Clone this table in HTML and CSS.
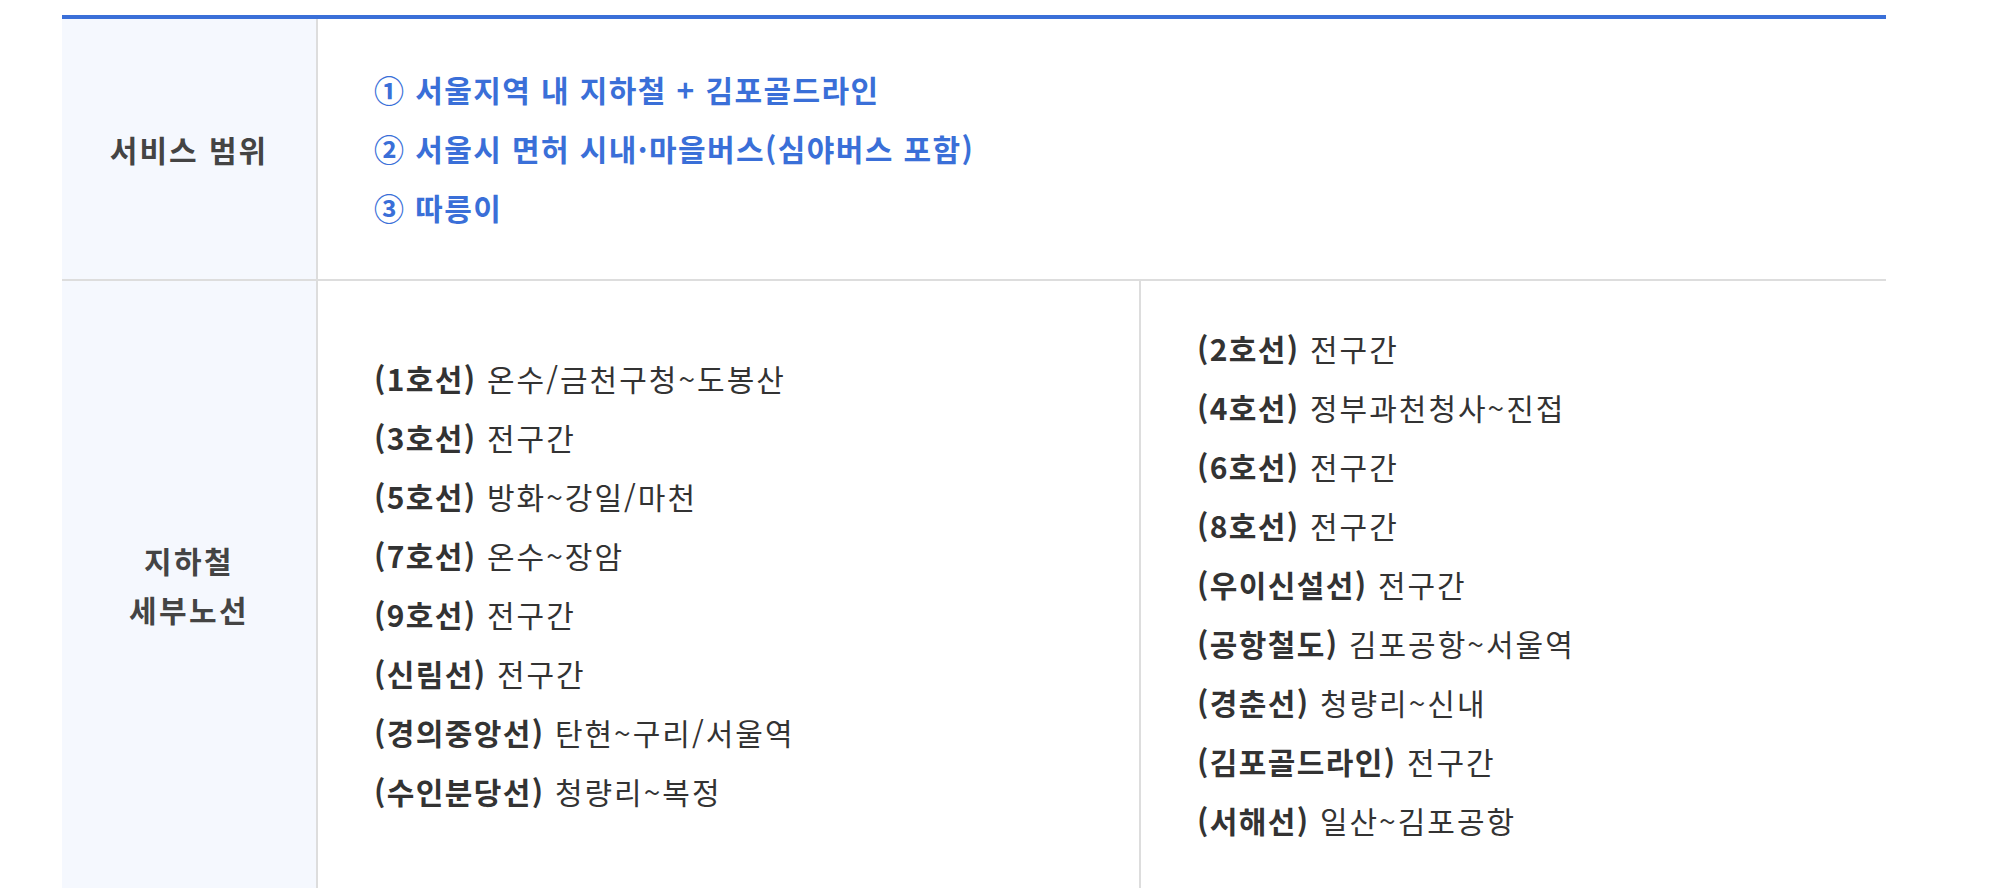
FILE: index.html
```html
<!DOCTYPE html>
<html lang="ko">
<head>
    <meta charset="UTF-8">
    <title>서비스 범위</title>
    <link rel="stylesheet" href="styles.css">
</head>
<body>
    <div class="scope">
        <div class="label row-top">서비스 범위</div>
        <div class="cell row-top">
            <ul class="range">
                <li>① 서울지역 내 지하철 + 김포골드라인</li>
                <li>② 서울시 면허 시내·마을버스(심야버스 포함)</li>
                <li>③ 따릉이</li>
            </ul>
        </div>
        <div class="label label-tall">지하철<br>세부노선</div>
        <div class="cell lines">
            <ul class="line-list">
                <li><b>(1호선)</b> 온수/금천구청~도봉산</li>
                <li><b>(3호선)</b> 전구간</li>
                <li><b>(5호선)</b> 방화~강일/마천</li>
                <li><b>(7호선)</b> 온수~장암</li>
                <li><b>(9호선)</b> 전구간</li>
                <li><b>(신림선)</b> 전구간</li>
                <li><b>(경의중앙선)</b> 탄현~구리/서울역</li>
                <li><b>(수인분당선)</b> 청량리~복정</li>
            </ul>
            <ul class="line-list">
                <li><b>(2호선)</b> 전구간</li>
                <li><b>(4호선)</b> 정부과천청사~진접</li>
                <li><b>(6호선)</b> 전구간</li>
                <li><b>(8호선)</b> 전구간</li>
                <li><b>(우이신설선)</b> 전구간</li>
                <li><b>(공항철도)</b> 김포공항~서울역</li>
                <li><b>(경춘선)</b> 청량리~신내</li>
                <li><b>(김포골드라인)</b> 전구간</li>
                <li><b>(서해선)</b> 일산~김포공항</li>
            </ul>
        </div>
    </div>
</body>
</html>
```

FILE: styles.css
```css
body { margin: 0; background: #fff; font-family: "Noto Sans CJK KR", "Noto Sans", sans-serif; color: #333; }
ul { list-style: none; margin: 0; padding: 0; }
.scope { width: 1824px; margin: 15px 0 0 62px; border-top: 4px solid #3a6fd8; display: grid; grid-template-columns: 256px 1fr; }
.label { background: #f5f8fe; border-right: 2px solid #dddddd; display: flex; align-items: center; justify-content: center; text-align: center; font-size: 30px; line-height: 49px; font-weight: 700; color: #444; letter-spacing: 2px; }
.label-tall { letter-spacing: 2.4px; }
.row-top { border-bottom: 2px solid #dddddd; }
.cell { font-size: 30px; line-height: 59px; }
.range { padding: 41px 56px 42px; color: #3a6fd8; font-weight: 700; letter-spacing: 1.4px; }
.lines { display: grid; grid-template-columns: 823px 1fr; }
.line-list { display: flex; flex-direction: column; justify-content: center; padding: 38px 56px; letter-spacing: 2px; }
.line-list:first-child { border-right: 2px solid #dddddd; }
.line-list b { font-weight: 700; letter-spacing: 1.4px; }
```
